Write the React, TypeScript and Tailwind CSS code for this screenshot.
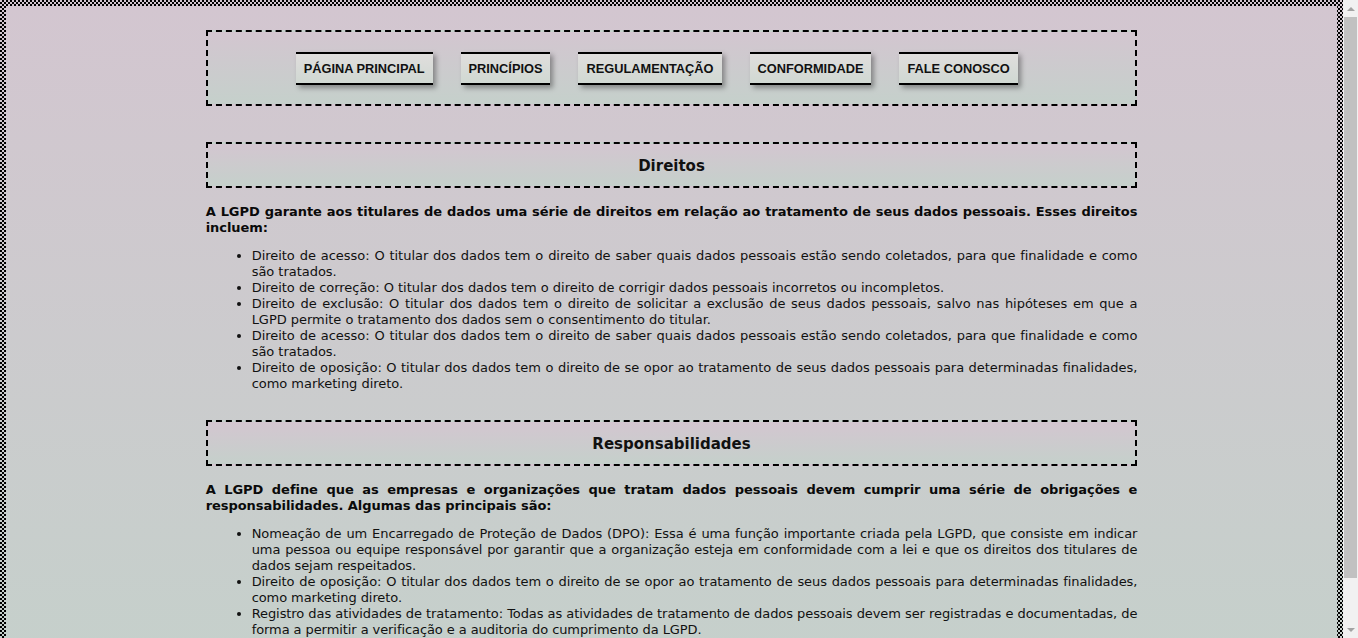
const navItems = ["PÁGINA PRINCIPAL", "PRINCÍPIOS", "REGULAMENTAÇÃO", "CONFORMIDADE", "FALE CONOSCO"];

const direitos = [
  "Direito de acesso: O titular dos dados tem o direito de saber quais dados pessoais estão sendo coletados, para que finalidade e como são tratados.",
  "Direito de correção: O titular dos dados tem o direito de corrigir dados pessoais incorretos ou incompletos.",
  "Direito de exclusão: O titular dos dados tem o direito de solicitar a exclusão de seus dados pessoais, salvo nas hipóteses em que a LGPD permite o tratamento dos dados sem o consentimento do titular.",
  "Direito de acesso: O titular dos dados tem o direito de saber quais dados pessoais estão sendo coletados, para que finalidade e como são tratados.",
  "Direito de oposição: O titular dos dados tem o direito de se opor ao tratamento de seus dados pessoais para determinadas finalidades, como marketing direto.",
];

const responsabilidades = [
  "Nomeação de um Encarregado de Proteção de Dados (DPO): Essa é uma função importante criada pela LGPD, que consiste em indicar uma pessoa ou equipe responsável por garantir que a organização esteja em conformidade com a lei e que os direitos dos titulares de dados sejam respeitados.",
  "Direito de oposição: O titular dos dados tem o direito de se opor ao tratamento de seus dados pessoais para determinadas finalidades, como marketing direto.",
  "Registro das atividades de tratamento: Todas as atividades de tratamento de dados pessoais devem ser registradas e documentadas, de forma a permitir a verificação e a auditoria do cumprimento da LGPD.",
];

const Section = ({
  title,
  intro,
  items,
  className,
  listClass,
}: {
  title: string;
  intro: string;
  items: string[];
  className: string;
  listClass: string;
}) => (
  <section className={`w-[70%] mx-auto ${className}`}>
    <h2 className="border-2 border-dashed border-black bg-[linear-gradient(#d3c6d0,#c5d0cb)] pt-[12px] pb-[10px] text-center text-[15px] leading-[20px] font-bold text-[#111]">
      {title}
    </h2>
    <p className="mt-[16px] text-justify font-bold text-[13px] leading-[16px] tracking-[-0.05px] text-[#0a0a0a]">{intro}</p>
    <ul className={`mt-[12px] list-disc pl-[46px] text-justify text-[13px] leading-[16px] text-[#111] ${listClass}`}>
      {items.map((item, i) => (
        <li key={i}>{item}</li>
      ))}
    </ul>
  </section>
);

// fake classic scrollbar, the page is a bit taller than the window
const Scrollbar = () => (
  <div className="fixed top-0 right-0 h-screen w-[15px] bg-[#f1f1f1] flex flex-col">
    <div className="h-[17px] flex items-center justify-center">
      <div className="w-0 h-0 border-x-[4px] border-x-transparent border-b-[4px] border-b-[#a3a3a3]" />
    </div>
    <div className="mx-[1px] h-[561px] bg-[#c1c1c1]" />
    <div className="flex-1" />
    <div className="h-[17px] flex items-center justify-center">
      <div className="w-0 h-0 border-x-[4px] border-x-transparent border-t-[4px] border-t-[#a3a3a3]" />
    </div>
  </div>
);

export default function App() {
  return (
    <>
      <div className="mr-[15px] min-h-screen p-[6px] font-['DejaVu_Sans',sans-serif] [background:repeating-conic-gradient(#000_0_25%,transparent_0_50%)_0_0/4px_4px,linear-gradient(#d3c6d0,#c5d0cb)]">
        <div className="bg-[linear-gradient(#d3c6d0,#c5d0cb)] pt-[24px] pb-[30px]">
          <nav className="w-[70%] mx-auto border-2 border-dashed border-black bg-[linear-gradient(#d3c6d0,#c5d0cb)] pt-[20px] pb-[19px] pl-[88px]">
            <ul className="flex gap-[28px]">
              {navItems.map((item) => (
                <li key={item}>
                  <a
                    href="#"
                    className="block border-y-2 border-black bg-[linear-gradient(#e0dedd,#d0d8d2)] px-[8px] py-[7px] font-['Liberation_Sans',Arial,sans-serif] text-[12.8px] leading-[15px] font-bold text-[#111] shadow-[3px_3px_5px_rgba(0,0,0,0.35)]"
                  >
                    {item}
                  </a>
                </li>
              ))}
            </ul>
          </nav>

          <Section
            className="mt-[36px]"
            listClass="tracking-[-0.03px]"
            title="Direitos"
            intro="A LGPD garante aos titulares de dados uma série de direitos em relação ao tratamento de seus dados pessoais. Esses direitos incluem:"
            items={direitos}
          />

          <Section
            className="mt-[28px]"
            listClass="tracking-[-0.08px]"
            title="Responsabilidades"
            intro="A LGPD define que as empresas e organizações que tratam dados pessoais devem cumprir uma série de obrigações e responsabilidades. Algumas das principais são:"
            items={responsabilidades}
          />
        </div>
      </div>
      <Scrollbar />
    </>
  );
}
